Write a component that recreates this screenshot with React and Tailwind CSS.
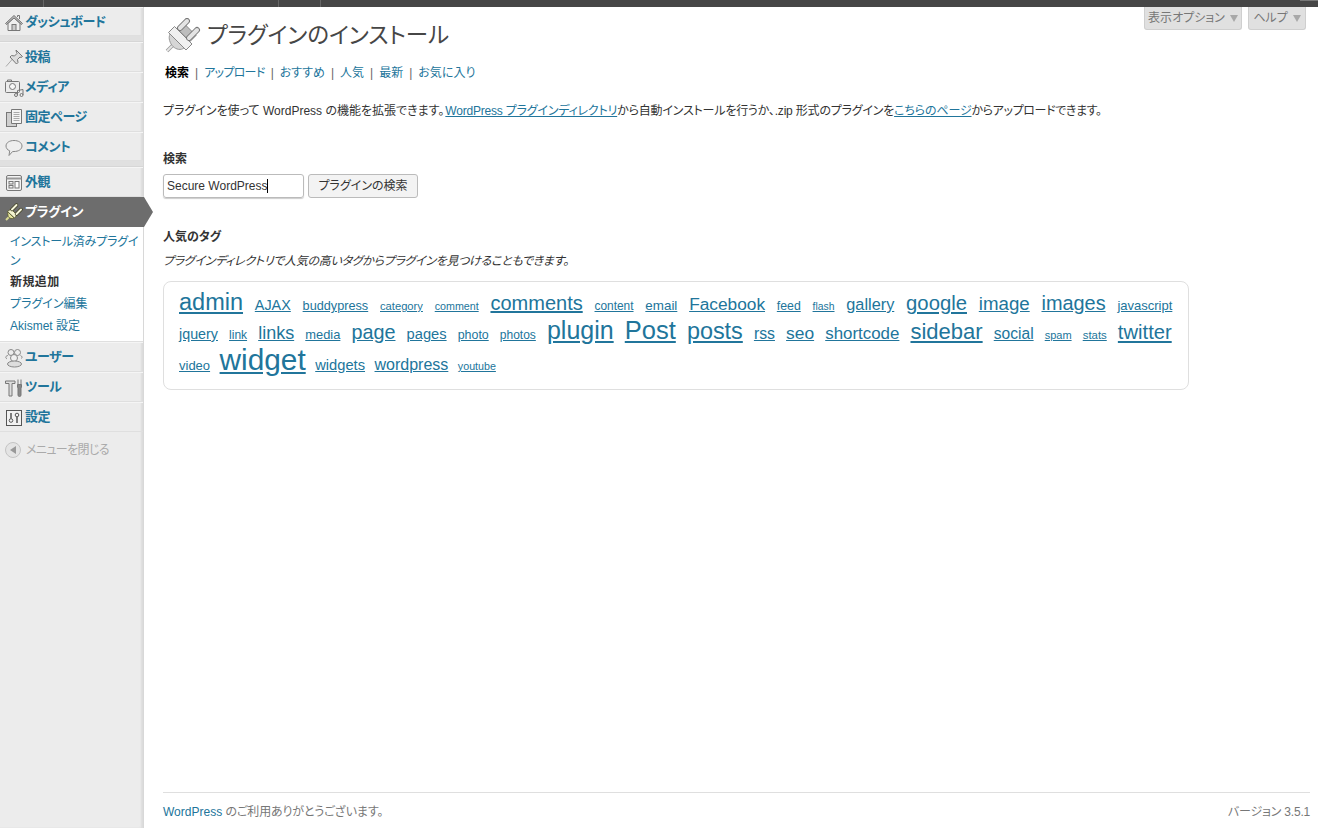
import React from 'react'

const FONT = '"Liberation Sans","Noto Sans CJK JP",sans-serif'

const Dash = () => (
  <svg width="18" height="18" viewBox="0 0 18 18" fill="none" stroke="#777" strokeWidth="1">
    <path d="M12.500 3V1.500h2V5" />
    <path d="M.5 9.500 9 1.500l8.500 8-1 1L9 4 1.500 10.500z" fill="#bbb" />
    <path d="M3 9.500v7h12v-7L9 4z" fill="#efefef" />
    <rect x="7" y="10.500" width="4" height="6" fill="#ccc" />
  </svg>
)
const PinIcon = () => (
  <svg width="20" height="20" viewBox="0 0 20 20">
    <path d="M2 18.500 8.500 11" stroke="#aaa" strokeWidth="1" fill="none" />
    <path d="M12 2l6.500 6.500-1.500 1-1-.5-2.500 2.500.5 3-1.500 1.500L6 9l1.500-1.500 3 .5L13 5.500l-.5-1z" fill="#ddd" stroke="#777" strokeWidth="1" />
  </svg>
)
const MediaIcon = () => (
  <svg width="20" height="20" viewBox="0 0 20 20" fill="none" stroke="#777" strokeWidth="1">
    <rect x="1.500" y="3.500" width="14" height="11" rx="1" fill="#ececec" />
    <path d="M3.500 3.500V2h4v1.500" />
    <circle cx="8.500" cy="8.500" r="3" fill="#f7f7f7" />
    <circle cx="12" cy="17" r="1.500" fill="#eee" />
    <circle cx="17.500" cy="17" r="1.500" fill="#eee" />
    <path d="M13.500 17v-4.500l5.500-1V17" />
  </svg>
)
const PageIcon = () => (
  <svg width="18" height="20" viewBox="0 0 18 20" fill="#cfcfcf" stroke="#777" strokeWidth="1">
    <rect x="1.500" y="4.500" width="10" height="14" />
    <path d="M6.500 1.500h10v14h-10z" fill="#f4f4f4" />
    <path d="M8.500 4.500h6M8.500 6.500h6M8.500 8.500h6M8.500 10.500h6M8.500 12.500h6" stroke="#aaa" />
  </svg>
)
const CommentIcon = () => (
  <svg width="20" height="20" viewBox="0 0 20 20" fill="#eee" stroke="#888" strokeWidth="1">
    <path d="M10 2.500c4.500 0 8 2.200 8 5.500s-3.500 5.500-8 5.500c-.6 0-1 0-1.500.1L5 17.500l.7-4.700C3.300 11.800 2 10.100 2 8c0-3.300 3.500-5.500 8-5.500z" />
  </svg>
)
const LayoutIcon = () => (
  <svg width="18" height="18" viewBox="0 0 18 18" fill="none" stroke="#777" strokeWidth="1">
    <rect x="1.500" y="1.500" width="15" height="15" rx="1.500" fill="#f4f4f4" />
    <path d="M1.500 4.500h15" strokeWidth="2" stroke="#999" />
    <rect x="4" y="7.500" width="4" height="2.500" />
    <rect x="4" y="11.500" width="4" height="2.500" />
    <rect x="10" y="7.500" width="4" height="6.500" fill="#fff" />
  </svg>
)
const SmallPlug = () => (
  <svg width="20" height="20" viewBox="0 0 20 20">
    <path d="M2 18l4-4" stroke="#d8d890" strokeWidth="2" fill="none" />
    <path d="M4 10l6 6c-2 1-4 .5-5-.5S3.500 12 4 10z" fill="#e6e6a0" stroke="#55552a" strokeWidth=".8" />
    <path d="M3.500 9.500 7 7l6 6-2.500 3z" fill="#f4f4d0" stroke="#55552a" strokeWidth=".8" />
    <path d="M8 7.500 12.500 3M12.500 12 17 7.500" stroke="#3f3f20" strokeWidth="3.500" fill="none" strokeLinecap="round" />
    <path d="M8 7.500 12.500 3M12.500 12 17 7.500" stroke="#f5f5dc" strokeWidth="2" fill="none" strokeLinecap="round" />
  </svg>
)
const UsersIcon = () => (
  <svg width="20" height="20" viewBox="0 0 20 20" fill="#f0f0f0" stroke="#888" strokeWidth="1">
    <circle cx="7" cy="4.500" r="3" fill="none" />
    <circle cx="13.500" cy="4.500" r="3" fill="none" />
    <path d="M3 11c-2-1.500-1.500-3 1-3.500M17.500 10.500c1-1 .5-2.500-1-3" fill="none" />
    <circle cx="10" cy="10" r="3.500" />
    <ellipse cx="10.500" cy="16" rx="7" ry="3" fill="#ddd" />
  </svg>
)
const ToolsIcon = () => (
  <svg width="20" height="20" viewBox="0 0 20 20" fill="#ddd" stroke="#777" strokeWidth="1">
    <path d="M1.500 3h9.500v2.500H8V18H5V5.500H1.500z" />
    <path d="M14 1.500v5h3v-5" fill="none" />
    <path d="M13.500 6.500h4V9l-.5 1v7a1.500 1.500 0 0 1-3 0v-7l-.5-1z" fill="#888" />
  </svg>
)
const SettingsIcon = () => (
  <svg width="18" height="18" viewBox="0 0 18 18" fill="none" stroke="#555" strokeWidth="1">
    <rect x="1.500" y="1.500" width="15" height="15" fill="#f2f2f2" />
    <circle cx="6" cy="11.500" r="1.800" />
    <path d="M6 4v5.500" strokeWidth="1.500" />
    <circle cx="12" cy="6" r="1.800" />
    <path d="M12 8v6" strokeWidth="1.500" />
  </svg>
)
const BigPlug = () => (
  <svg width="36" height="36" viewBox="0 0 36 36">
    <path d="M2 33l7-7" stroke="#999" strokeWidth="3.500" fill="none" />
    <path d="M2 33l7-7" stroke="#e6e6e6" strokeWidth="2" fill="none" />
    <path d="M5 16l14 14c-3 2.500-8 1.500-11-1.500S3 20 5 16z" fill="#d6d6d6" stroke="#999" />
    <path d="M13 11.500l6-6 12 12-6 6z" fill="#bdbdbd" stroke="#888" />
    <path d="M3.500 14.500l6-6 17.500 17.500-6 6z" fill="#f0f0f0" stroke="#888" />
    <path d="M15 10 22 3M24 20l8-8" stroke="#777" strokeWidth="6" strokeLinecap="round" fill="none" />
    <path d="M15 10 22 3M24 20l8-8" stroke="#e4e4e4" strokeWidth="4" strokeLinecap="round" fill="none" />
  </svg>
)

const topMenu = [
  { label: 'ダッシュボード', Icon: Dash, h: 'h-[29px]' },
  'sep',
  { label: '投稿', Icon: PinIcon },
  { label: 'メディア', Icon: MediaIcon },
  { label: '固定ページ', Icon: PageIcon },
  { label: 'コメント', Icon: CommentIcon, h: 'h-[29px]' },
  'sep',
  { label: '外観', Icon: LayoutIcon },
]

const bottomMenu = [
  { label: 'ユーザー', Icon: UsersIcon },
  { label: 'ツール', Icon: ToolsIcon },
  { label: '設定', Icon: SettingsIcon },
]

const subMenu = [
  { label: 'インストール済みプラグイン', cls: 'leading-[19px] pt-[3px] text-[#21759b] tracking-[-0.2px]' },
  { label: '新規追加', cls: 'font-bold py-[3px] leading-[16px] text-[#333] tracking-[0.4px]' },
  { label: 'プラグイン編集', cls: 'py-[3px] leading-[16px] text-[#21759b]' },
  { label: 'Akismet 設定', cls: 'py-[3px] leading-[16px] text-[#21759b]' },
]

const tabs = ['検索', 'アップロード', 'おすすめ', '人気', '最新', 'お気に入り']

const tagRows = [
  {
    cls: 'h-[28px] gap-x-[11.8px]',
    tags: [
      ['admin', 'text-[23.5px]'], ['AJAX', 'text-[14.4px]'], ['buddypress', 'text-[12.7px]'], ['category', 'text-[11.2px]'],
      ['comment', 'text-[10.7px]'], ['comments', 'text-[20px]'], ['content', 'text-[11.9px]'], ['email', 'text-[13.4px]'],
      ['Facebook', 'text-[17.3px]'], ['feed', 'text-[12.3px]'], ['flash', 'text-[10.4px]'], ['gallery', 'text-[16.3px]'],
      ['google', 'text-[20.3px]'], ['image', 'text-[18.7px]'], ['images', 'text-[19.9px]'], ['javascript', 'text-[13px]'],
    ],
  },
  {
    cls: 'h-[29px] gap-x-[11.1px]',
    tags: [
      ['jquery', 'text-[14.3px]'], ['link', 'text-[12px]'], ['links', 'text-[18px]'], ['media', 'text-[12.9px]'],
      ['page', 'text-[19.8px]'], ['pages', 'text-[14.7px]'], ['photo', 'text-[12.4px]'], ['photos', 'text-[12px]'],
      ['plugin', 'text-[25px]'], ['Post', 'text-[25.5px]'], ['posts', 'text-[23.4px]'], ['rss', 'text-[15.8px]'],
      ['seo', 'text-[17.4px]'], ['shortcode', 'text-[16.9px]'], ['sidebar', 'text-[22px]'], ['social', 'text-[15.6px]'],
      ['spam', 'text-[11px]'], ['stats', 'text-[11.4px]'], ['twitter', 'text-[20.2px]'],
    ],
  },
  {
    cls: 'h-[29px] gap-x-[9.5px]',
    tags: [
      ['video', 'text-[13px]'], ['widget', 'text-[29.8px]'], ['widgets', 'text-[14.7px]'], ['wordpress', 'text-[16px]'], ['youtube', 'text-[10.7px]'],
    ],
  },
]

const MenuItem = ({ label, Icon, h = 'h-[30px]' }) => (
  <div className={`${h} flex items-center gap-[1px] pl-[3px] border-t border-t-[#f5f5f5] border-b border-b-[#dfdfdf]`}>
    <span className="w-[21px] mt-[2px] flex justify-center"><Icon /></span>
    <span className="text-[13px] font-bold text-[#21759b] tracking-[-0.4px]">{label}</span>
  </div>
)

const Sidebar = () => (
  <div className="w-[144px] shrink-0 bg-[#ececec] border-r border-r-[#d8d8d8] shadow-[inset_-2px_0_2px_#dcdcdc]">
    {topMenu.map((m, i) =>
      m === 'sep' ? (
        <div key={i} className="h-[6px] bg-[#e0e0e0] border-b border-b-[#d6d6d6]" />
      ) : (
        <MenuItem key={i} {...m} />
      )
    )}
    <div className="relative h-[30px] bg-[#6d6d6d] flex items-center gap-[1px] pl-[3px] w-[144px]">
      <span className="w-[21px] flex justify-center"><SmallPlug /></span>
      <span className="text-[13px] font-bold text-white tracking-[-0.3px]">プラグイン</span>
      <div className="absolute left-[144px] top-0 w-0 h-0 border-y-[15px] border-y-transparent border-l-[9px] border-l-[#6d6d6d]" />
    </div>
    <div className="bg-white w-[143px] pl-[10px] pt-[3px] pb-[4px] text-[12px] border-b border-b-[#dfdfdf]">
      {subMenu.map((s) => (
        <div key={s.label} className={s.cls}>{s.label}</div>
      ))}
    </div>
    {bottomMenu.map((m) => (
      <MenuItem key={m.label} {...m} />
    ))}
    <div className="h-[36px] flex items-center pl-[5px] gap-[5px]">
      <span className="w-[16px] h-[16px] rounded-full border border-[#c4c4c4] bg-[#e4e4e4] flex items-center justify-center">
        <span className="w-0 h-0 border-y-[4px] border-y-transparent border-r-[6px] border-r-[#999]" />
      </span>
      <span className="text-[12px] text-[#aaa] tracking-[-0.6px]">メニューを閉じる</span>
    </div>
  </div>
)

const ScreenTab = ({ label, w }) => (
  <div className={`${w} h-[23px] bg-[#e0e0e0] border border-t-0 border-[#cfcfcf] rounded-b-[3px] flex items-center justify-center gap-[5px] text-[12px] text-[#777] whitespace-nowrap`}>
    <span>{label}</span>
    <span className="w-0 h-0 border-x-[4px] border-x-transparent border-t-[7px] border-t-[#a8a8a8]" />
  </div>
)

export default function App() {
  return (
    <div className="w-[1318px] h-[828px] overflow-hidden flex flex-col bg-white text-[12px] text-[#333] [font-feature-settings:'palt']" style={{ fontFamily: FONT }}>
      <div className="h-[7px] shrink-0 bg-[#464646] flex">
        <div className="w-[44px] border-r border-r-[#666]" />
        <div className="w-[235px] border-r border-r-[#666]" />
        <div className="w-[42px] border-r border-r-[#666]" />
        <div className="flex-1" />
        <div className="w-[18px] h-px bg-[#777]" />
      </div>
      <div className="flex-1 flex min-h-0">
        <Sidebar />
        <div className="flex-1 flex flex-col pl-[19px] pr-[8px]">
          <div className="flex justify-between items-start">
            <div className="flex items-center gap-[6px] pt-[10px] pl-[2px]">
              <BigPlug />
              <h1 className="text-[22.5px] text-[#464646] leading-[38px]">プラグインのインストール</h1>
            </div>
            <div className="flex gap-[6px] pr-[4px]">
              <ScreenTab label="表示オプション" w="w-[98px]" />
              <ScreenTab label="ヘルプ" w="w-[58px]" />
            </div>
          </div>
          <div className="flex items-center pl-[2px] mt-[9px] h-[18px] text-[#21759b]">
            {tabs.map((t, i) => (
              <React.Fragment key={t}>
                {i > 0 && <span className="mx-[6px] text-[#666]">|</span>}
                <span className={i === 0 ? 'font-bold text-black' : i === 1 ? 'tracking-[-0.7px]' : ''}>{t}</span>
              </React.Fragment>
            ))}
          </div>
          <p className="mt-[20px] leading-[18px]">
            プラグインを使って WordPress の機能を拡張できます。
            <a className="underline text-[#21759b] tracking-[-0.2px] ml-[1px]">WordPress プラグインディレクトリ</a>
            <span className="tracking-[-0.2px]">から自動インストールを行うか、.zip 形式のプラグインを</span>
            <a className="underline text-[#21759b] tracking-[-0.15px]">こちらのページ</a>
            <span className="tracking-[-0.38px]">からアップロードできます。</span>
          </p>
          <h4 className="mt-[31px] font-bold leading-[16px]">検索</h4>
          <div className="flex gap-[4px] mt-[7px]">
            <div className="w-[141px] h-[24px] border border-[#bbb] rounded-[3px] shadow-[0_1px_1px_#ccc] flex items-center pl-[3px] text-[12px] text-[#333]">
              Secure WordPress<span className="w-px h-[14px] bg-black" />
            </div>
            <div className="w-[110px] h-[24px] border border-[#bbb] rounded-[3px] bg-[#f3f3f3] flex items-center justify-center text-[#333]">
              プラグインの検索
            </div>
          </div>
          <h4 className="mt-[31px] font-bold leading-[16px]">人気のタグ</h4>
          <p className="mt-[8px] italic leading-[16px] tracking-[-0.3px]">プラグインディレクトリで人気の高いタグからプラグインを見つけることもできます。</p>
          <div className="mt-[12px] w-[1026px] h-[109px] border border-[#dfdfdf] rounded-[8px] px-[15px] pt-[6px]">
            {tagRows.map((row) => (
              <div key={row.tags[0][0]} className={`${row.cls} flex items-baseline`}>
                {row.tags.map(([t, cls]) => (
                  <a key={t} className={`${cls} leading-[29px] underline text-[#21759b]`}>{t}</a>
                ))}
              </div>
            ))}
          </div>
          <div className="mt-auto h-[36px] border-t border-t-[#dfdfdf] flex items-center justify-between text-[#777]">
            <span className="pt-[3px]"><a className="text-[#21759b]">WordPress</a> <span className="tracking-[-0.15px]">のご利用ありがとうございます。</span></span>
            <span className="pt-[3px] tracking-[-0.2px]">バージョン 3.5.1</span>
          </div>
        </div>
      </div>
    </div>
  )
}
